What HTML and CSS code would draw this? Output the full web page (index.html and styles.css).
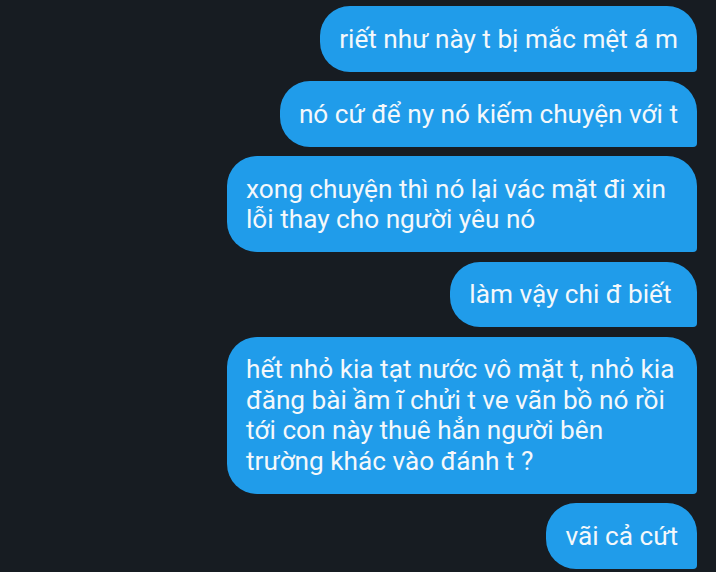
FILE: index.html
```html
<!DOCTYPE html>
<html lang="vi">
<head>
<meta charset="utf-8">
<link rel="stylesheet" href="styles.css">
</head>
<body>
<div class="chat">
  <div class="bubble">riết như này t bị mắc mệt á m</div>
  <div class="bubble">nó cứ để ny nó kiếm chuyện với t</div>
  <div class="bubble wide">xong chuyện thì nó lại vác mặt đi xin<br>lỗi thay cho người yêu nó</div>
  <div class="bubble">làm vậy chi đ biết&nbsp;</div>
  <div class="bubble wide">hết nhỏ kia tạt nước vô mặt t, nhỏ kia<br>đăng bài ầm ĩ chửi t ve vãn bồ nó rồi<br>tới con này thuê hẳn người bên<br>trường khác vào đánh t ?</div>
  <div class="bubble">vãi cả cứt</div>
</div>
</body>
</html>
```

FILE: styles.css
```css
html, body {
  margin: 0;
  padding: 0;
  background: #171c22;
  height: 100%;
  overflow: hidden;
}
.chat {
  display: flex;
  flex-direction: column;
  align-items: flex-end;
  gap: 9.5px;
  padding: 6px 19px 0 0;
}
.bubble {
  background: #209cea;
  color: #f4f8fb;
  font-family: Roboto, "Noto Sans", sans-serif;
  font-size: 26.2px;
  line-height: 30.5px;
  padding: 17.5px 19px 17.5px 19px;
  border-radius: 30px 30px 4px 30px;
  white-space: nowrap;
}
.wide {
  width: 432px;
}
```
